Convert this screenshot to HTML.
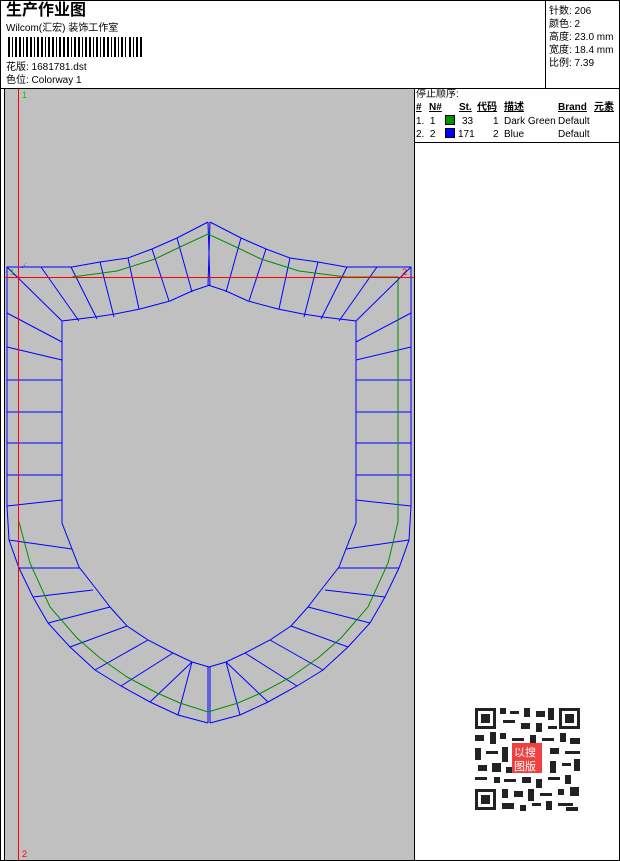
<!DOCTYPE html>
<html><head><meta charset="utf-8"><style>
*{margin:0;padding:0;box-sizing:border-box}
body{width:620px;height:861px;background:#fff;position:relative;overflow:hidden;font-family:"Liberation Sans","WenQuanYi Zen Hei","Noto Sans CJK SC",sans-serif;font-size:10px;color:#000}
.a{position:absolute;white-space:nowrap;line-height:12px}
.u{text-decoration:underline;font-weight:bold}
</style></head><body>
<div style="position:absolute;left:0;top:0;width:620px;height:861px;border:1px solid #000"></div>
<div style="position:absolute;left:0;top:88px;width:620px;height:1px;background:#000"></div>
<div style="position:absolute;left:545px;top:0;width:1px;height:88px;background:#000"></div>
<div class="a" style="left:6px;top:2px;font-size:16px;line-height:18px;font-weight:bold">生产作业图</div>
<div class="a" style="left:6px;top:23px">Wilcom(汇宏) 装饰工作室</div>
<svg style="position:absolute;left:8px;top:37px" width="134" height="20"><g fill="#000">
<rect x="0" y="0" width="2" height="20"/><rect x="4" y="0" width="1" height="20"/><rect x="7" y="0" width="2" height="20"/><rect x="11" y="0" width="2" height="20"/><rect x="15" y="0" width="1" height="20"/><rect x="18" y="0" width="2" height="20"/><rect x="22" y="0" width="2" height="20"/><rect x="26" y="0" width="1" height="20"/><rect x="29" y="0" width="2" height="20"/><rect x="33" y="0" width="2" height="20"/><rect x="37" y="0" width="1" height="20"/><rect x="40" y="0" width="2" height="20"/><rect x="44" y="0" width="2" height="20"/><rect x="48" y="0" width="1" height="20"/><rect x="51" y="0" width="2" height="20"/><rect x="55" y="0" width="2" height="20"/><rect x="59" y="0" width="2" height="20"/><rect x="63" y="0" width="1" height="20"/><rect x="66" y="0" width="2" height="20"/><rect x="70" y="0" width="2" height="20"/><rect x="74" y="0" width="1" height="20"/><rect x="77" y="0" width="2" height="20"/><rect x="81" y="0" width="2" height="20"/><rect x="85" y="0" width="1" height="20"/><rect x="88" y="0" width="2" height="20"/><rect x="92" y="0" width="1" height="20"/><rect x="95" y="0" width="2" height="20"/><rect x="99" y="0" width="2" height="20"/><rect x="103" y="0" width="1" height="20"/><rect x="106" y="0" width="2" height="20"/><rect x="110" y="0" width="1" height="20"/><rect x="113" y="0" width="2" height="20"/><rect x="117" y="0" width="1" height="20"/><rect x="121" y="0" width="2" height="20"/><rect x="125" y="0" width="1" height="20"/><rect x="128" y="0" width="2" height="20"/><rect x="132" y="0" width="2" height="20"/></g></svg>
<div class="a" style="left:6px;top:62px">花版: 1681781.dst</div>
<div class="a" style="left:6px;top:75px">色位: Colorway 1</div>
<div class="a" style="left:549px;top:5px;line-height:13px">针数: 206<br>颜色: 2<br>高度: 23.0 mm<br>宽度: 18.4 mm<br>比例: 7.39</div>

<div style="position:absolute;left:4px;top:89px;width:410px;height:771px;background:#c0c0c0;border-left:1px solid #000"></div>
<div style="position:absolute;left:414px;top:89px;width:1px;height:771px;background:#000"></div>
<div style="position:absolute;left:414px;top:142px;width:206px;height:1px;background:#000"></div>
<div class="a" style="left:416px;top:89px">停止顺序:</div>
<div class="a" style="left:416px;top:102px"><span class="u">#</span></div>
<div class="a" style="left:429px;top:102px"><span class="u">N#</span></div>
<div class="a" style="left:459px;top:102px"><span class="u">St.</span></div>
<div class="a" style="left:477px;top:102px"><span class="u">代码</span></div>
<div class="a" style="left:504px;top:102px"><span class="u">描述</span></div>
<div class="a" style="left:558px;top:102px"><span class="u">Brand</span></div>
<div class="a" style="left:594px;top:102px"><span class="u">元素</span></div>
<div class="a" style="left:416px;top:116px">1.&nbsp; 1</div>
<div style="position:absolute;left:445px;top:115px;width:10px;height:10px;background:#009000;border:1px solid #000"></div>
<div class="a" style="left:462px;top:116px">33</div><div class="a" style="left:493px;top:116px">1</div><div class="a" style="left:504px;top:116px">Dark Green</div><div class="a" style="left:558px;top:116px">Default</div>
<div class="a" style="left:416px;top:129px">2.&nbsp; 2</div>
<div style="position:absolute;left:445px;top:128px;width:10px;height:10px;background:#0000ff;border:1px solid #000"></div>
<div class="a" style="left:458px;top:129px">171</div><div class="a" style="left:493px;top:129px">2</div><div class="a" style="left:504px;top:129px">Blue</div><div class="a" style="left:558px;top:129px">Default</div>

<svg style="position:absolute;left:0;top:0" width="414" height="861">
<g fill="none" stroke="#0000ff" stroke-width="1">
<g id="h">
<polyline points="208,222 177,238 152,249 128,258 100,262 72,267 7,267 7,506 9,540 19,568 33,597 48,623 70,647 95,670 121,686 150,702 178,715 208,723"/>
<polyline points="210,285 192,291 170,301 140,309 115,314 95,317 62,321 62,523 79,567 97,590 110,607 127,626 148,640 173,653 192,662 209,667"/>
<path d="M7,267L62,321M41,267L79,321M71,267L97,319M100,262L114,317M128,258L139,309M152,249L169,301M177,238L192,292M208,222L210,285
M7,313L62,342M7,347L62,360M7,380L62,380M7,412L62,412M7,443L62,443M7,475L62,475M7,506L62,500
M9,540L72,549M19,568L80,568M33,597L93,590M48,623L110,607M70,647L127,626M95,670L148,640M121,686L173,653M150,702L192,662M178,715L192,662M208,723L208,667"/>
</g>
<use href="#h" transform="translate(418,0) scale(-1,1)"/>
</g>
<g fill="none" stroke="#008c00" stroke-width="1">
<polyline points="72,277 117,271 155,259 180,247 208,234 236,247 261,259 299,271 346,277 398,277 398,522 388,563 368,607 341,638 318,658 291,677 261,693 238,703 208,712 180,703 157,693 127,677 100,658 77,638 50,607 30,563 19,522"/>
</g>
<path d="M10,270L19,280M22,268L26,263" stroke="#0000ff" stroke-dasharray="1,2" fill="none"/>
<line x1="18.5" y1="89" x2="18.5" y2="860" stroke="#ff0000"/>
<line x1="4" y1="277.5" x2="414" y2="277.5" stroke="#ff0000"/>
<text x="22" y="98" fill="#00d000" font-size="9" font-family="Liberation Sans">1</text>
<text x="22" y="857" fill="#ff0000" font-size="9" font-family="Liberation Sans">2</text>
<text x="402" y="275" fill="#ff0000" font-size="9" font-family="Liberation Sans">2</text>
<text x="10" y="275" fill="#00d000" font-size="8" font-family="Liberation Sans">1</text>
</svg>

<svg style="position:absolute;left:470px;top:703px" width="116" height="112">
<rect x="0" y="0" width="116" height="112" fill="#fff"/>
<g fill="#222">
<rect x="5" y="5" width="21" height="21"/><rect x="8" y="8" width="15" height="15" fill="#fff"/><rect x="11" y="11" width="9" height="9"/>
<rect x="89" y="5" width="21" height="21"/><rect x="92" y="8" width="15" height="15" fill="#fff"/><rect x="95" y="11" width="9" height="9"/>
<rect x="5" y="86" width="21" height="21"/><rect x="8" y="89" width="15" height="15" fill="#fff"/><rect x="11" y="92" width="9" height="9"/>
<path d="M30 5h6v6h-6zM40 8h9v3h-9zM54 5h6v9h-6zM66 8h9v6h-9zM78 5h6v12h-6zM33 17h12v3h-12zM51 20h9v6h-9zM66 20h6v9h-6zM78 23h9v3h-9zM5 32h9v6h-9zM20 29h6v12h-6zM30 30h6v6h-6zM42 35h12v3h-12zM60 32h6v9h-6zM72 35h12v3h-12zM90 30h6v9h-6zM100 35h10v6h-10zM5 45h6v12h-6zM16 48h12v3h-12zM32 44h6v15h-6zM80 45h9v6h-9zM95 48h15v3h-15zM8 62h9v6h-9zM22 60h9v9h-9zM36 64h6v6h-6zM80 58h6v12h-6zM92 60h9v3h-9zM104 56h6v12h-6zM5 74h12v3h-12zM24 74h6v6h-6zM34 76h12v3h-12zM52 74h9v6h-9zM66 76h6v9h-6zM78 74h12v3h-12zM95 72h6v9h-6zM32 86h6v9h-6zM44 88h9v6h-9zM58 86h6v12h-6zM70 90h12v3h-12zM88 86h6v6h-6zM100 84h9v9h-9zM32 100h12v6h-12zM50 102h6v6h-6zM62 100h9v3h-9zM76 98h6v9h-6zM88 100h15v3h-15zM96 104h12v4h-12z"/>
</g>
<rect x="42" y="40" width="30" height="30" fill="#f04040"/>
<text x="44" y="53" fill="#fff" font-size="11" font-family="WenQuanYi Zen Hei,sans-serif">以搜</text>
<text x="44" y="67" fill="#fff" font-size="11" font-family="WenQuanYi Zen Hei,sans-serif">图版</text>
</svg>
</body></html>
